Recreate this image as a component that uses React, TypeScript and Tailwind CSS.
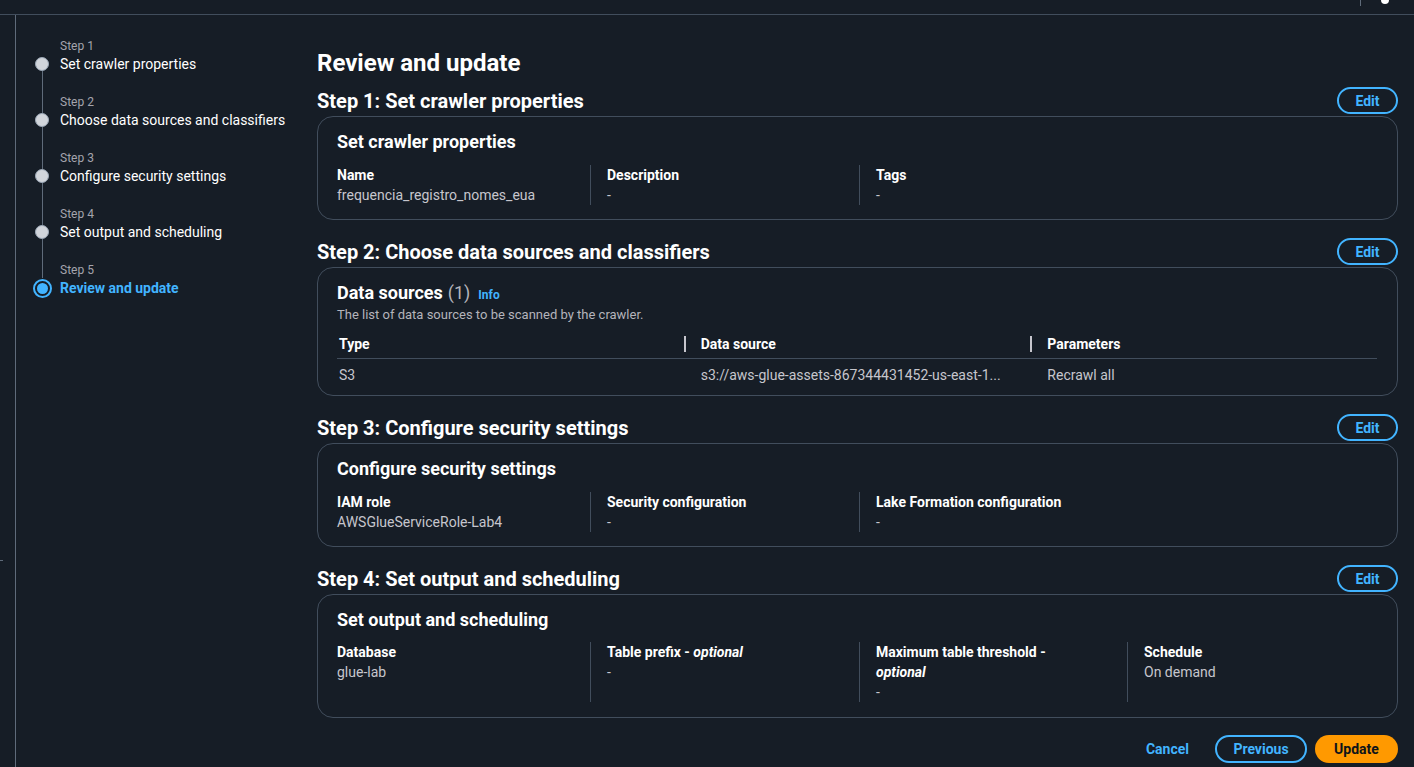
import React from 'react';

const steps = [
  'Set crawler properties',
  'Choose data sources and classifiers',
  'Configure security settings',
  'Set output and scheduling',
  'Review and update',
];

function EditButton() {
  return (
    <button className="h-[27px] w-[61px] rounded-full border-2 border-[#42b4ff] text-sm font-bold text-[#42b4ff]">
      Edit
    </button>
  );
}

function SectionHeader({ title }: { title: string }) {
  return (
    <div className="mb-[2px] flex h-7 items-end justify-between">
      <h2 className="mb-px text-xl font-bold leading-6 text-white">{title}</h2>
      <EditButton />
    </div>
  );
}

function KV({ label, value, first }: { label: React.ReactNode; value: string; first?: boolean }) {
  return (
    <div className={first ? 'pr-5' : 'border-l border-[#414d5c] pl-4 pr-5'}>
      <div className="text-sm font-bold leading-5 text-white">{label}</div>
      <div className="text-sm leading-5 text-[#c6c6cd]">{value}</div>
    </div>
  );
}

function Card({ title, children }: { title: string; children: React.ReactNode }) {
  return (
    <div className="rounded-2xl border border-[#414d5c] pb-[14px] pl-[19px] pr-5 pt-[13px]">
      <h3 className="text-lg font-bold leading-6 text-white">{title}</h3>
      <div className="mt-[11px] grid grid-cols-[253px_269px_268px_1fr]">{children}</div>
    </div>
  );
}

export default function App() {
  return (
    <div
      className="h-[767px] overflow-hidden bg-[#161d26] text-white"
      style={{ fontFamily: 'Roboto, "Noto Sans", sans-serif' }}
    >
      {/* top bar */}
      <div className="flex h-[15px] items-start justify-end border-b border-[#414d5c]">
        <div className="h-[6px] w-px bg-[#5f6b7a]" />
        <div className="ml-5 mr-[25px] h-[4px] w-[8px] rounded-b-full bg-white" />
      </div>

      <div className="flex">
        {/* collapsed nav strip */}
        <div className="h-[752px] w-4 shrink-0 border-r border-[#5f6b7a]">
          <div className="mt-[545px] h-px w-[3px] bg-[#5f6b7a]" />
        </div>

        {/* wizard steps */}
        <nav className="w-[301px] shrink-0 pl-4 pt-[23px]">
          {steps.map((s, i) => {
            const active = i === steps.length - 1;
            return (
              <div key={s} className="flex gap-2">
                <div className="flex w-5 flex-col items-center">
                  <div className={`h-4 w-px ${i > 0 ? 'bg-[#5f6b7a]' : ''}`} />
                  <div className="flex h-5 flex-col items-center justify-center">
                    {active ? (
                      <div className="flex h-[19px] w-[19px] items-center justify-center rounded-full border-2 border-[#42b4ff]">
                        <div className="h-[11px] w-[11px] rounded-full bg-[#42b4ff]" />
                      </div>
                    ) : (
                      <>
                        <div className="h-[3px] w-px bg-[#5f6b7a]" style={{ opacity: i > 0 ? 1 : 0 }} />
                        <div className="h-[14px] w-[14px] rounded-full border border-[#9ba7b6] bg-[#d1d5db]" />
                        <div className="h-[3px] w-px bg-[#5f6b7a]" />
                      </>
                    )}
                  </div>
                  <div className={`h-5 w-px ${active ? '' : 'bg-[#5f6b7a]'}`} />
                </div>
                <div>
                  <div className="text-xs leading-4 text-[#a4a4ad]">Step {i + 1}</div>
                  <div
                    className={`text-sm leading-5 ${active ? 'font-bold text-[#42b4ff]' : 'text-white'}`}
                  >
                    {s}
                  </div>
                </div>
              </div>
            );
          })}
        </nav>

        {/* main content */}
        <main className="flex-1 pr-4 pt-[32px]">
          <h1 className="mb-[7px] text-2xl font-bold leading-8 text-white">Review and update</h1>

          <SectionHeader title="Step 1: Set crawler properties" />
          <Card title="Set crawler properties">
            <KV first label="Name" value="frequencia_registro_nomes_eua" />
            <KV label="Description" value="-" />
            <KV label="Tags" value="-" />
          </Card>

          <div className="mt-[17px]">
            <SectionHeader title="Step 2: Choose data sources and classifiers" />
            <div className="rounded-2xl border border-[#414d5c] pb-[10px] pl-[19px] pr-5 pt-[13px]">
              <h3 className="flex items-baseline text-lg leading-6">
                <span className="font-bold text-white">Data sources</span>
                <span className="ml-[5px] text-[#b4b4bb]">(1)</span>
                <span className="ml-2 text-xs font-bold text-[#42b4ff]">Info</span>
              </h3>
              <p className="mt-px text-[13px] leading-[18px] text-[#b4b4bb]">
                The list of data sources to be scanned by the crawler.
              </p>
              <div className="mt-[10px] grid grid-cols-3 border-b border-[#414d5c] pb-1 text-sm font-bold leading-5">
                <div className="pl-[2px]">Type</div>
                <div className="relative pl-[17px]">
                  <span className="absolute left-0 top-[2px] h-4 w-[2px] bg-[#c6c6cd]" />
                  Data source
                </div>
                <div className="relative pl-[17px]">
                  <span className="absolute left-0 top-[2px] h-4 w-[2px] bg-[#c6c6cd]" />
                  Parameters
                </div>
              </div>
              <div className="grid grid-cols-3 pt-[6px] text-sm leading-5 text-[#c6c6cd]">
                <div className="pl-[2px]">S3</div>
                <div className="pl-[17px]">s3://aws-glue-assets-867344431452-us-east-1...</div>
                <div className="pl-[17px]">Recrawl all</div>
              </div>
            </div>
          </div>

          <div className="mt-[17px]">
            <SectionHeader title="Step 3: Configure security settings" />
            <Card title="Configure security settings">
              <KV first label="IAM role" value="AWSGlueServiceRole-Lab4" />
              <KV label="Security configuration" value="-" />
              <KV label="Lake Formation configuration" value="-" />
            </Card>
          </div>

          <div className="mt-[17px]">
            <SectionHeader title="Step 4: Set output and scheduling" />
            <div className="rounded-2xl border border-[#414d5c] pb-[15px] pl-[19px] pr-5 pt-[13px]">
              <h3 className="text-lg font-bold leading-6 text-white">Set output and scheduling</h3>
              <div className="mt-[10px] grid grid-cols-[253px_269px_268px_1fr]">
                <KV first label="Database" value="glue-lab" />
                <KV
                  label={
                    <>
                      Table prefix - <i>optional</i>
                    </>
                  }
                  value="-"
                />
                <div className="border-l border-[#414d5c] pl-4 pr-5">
                  <div className="text-sm font-bold leading-5 text-white">
                    Maximum table threshold -<br />
                    <i>optional</i>
                  </div>
                  <div className="text-sm leading-5 text-[#c6c6cd]">-</div>
                </div>
                <KV label="Schedule" value="On demand" />
              </div>
            </div>
          </div>

          <div className="mt-[17px] flex items-center justify-end gap-2">
            <button className="h-7 px-[18px] text-sm font-bold text-[#42b4ff]">Cancel</button>
            <button className="h-7 w-[92px] rounded-full border-2 border-[#42b4ff] text-sm font-bold text-[#42b4ff]">
              Previous
            </button>
            <button className="h-7 w-[83px] rounded-full bg-[#ff9900] text-sm font-bold text-[#0f141a]">
              Update
            </button>
          </div>
        </main>
      </div>
    </div>
  );
}
